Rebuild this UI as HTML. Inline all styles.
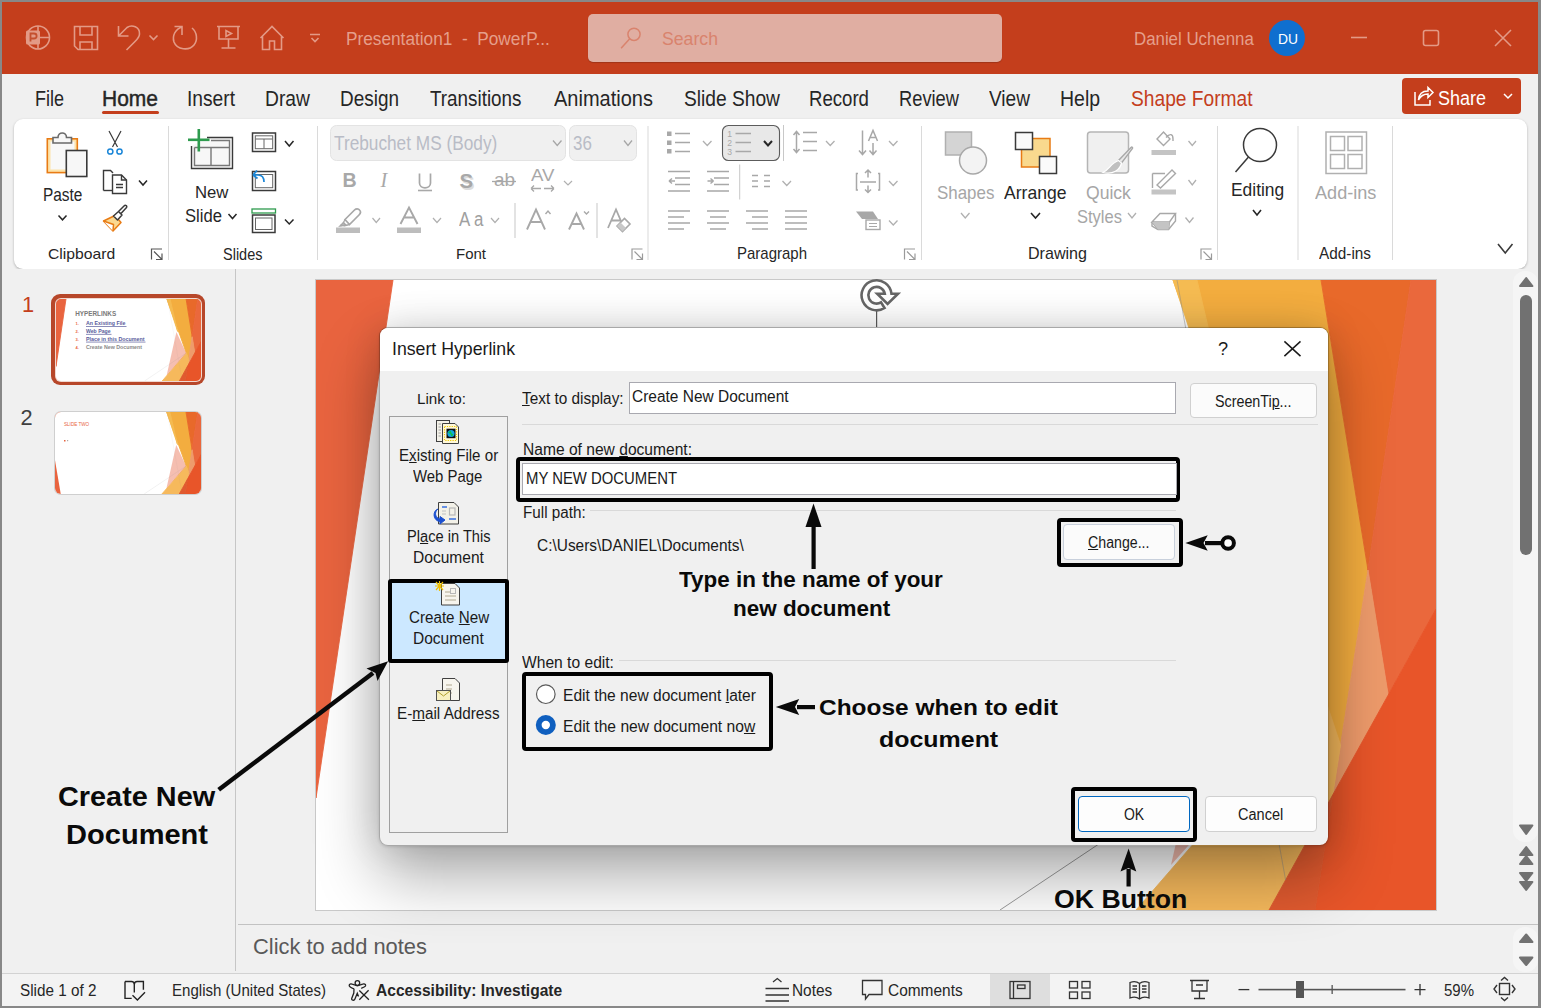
<!DOCTYPE html>
<html><head><meta charset="utf-8">
<style>
*{margin:0;padding:0;box-sizing:border-box}
html,body{width:1541px;height:1008px;overflow:hidden;background:#f0f0f0;font-family:"Liberation Sans",sans-serif;color:#262626}
.a{position:absolute;white-space:nowrap}
svg.a{overflow:visible}
</style></head><body>
<div class="a" style="left:0;top:0;width:1541px;height:74px;background:#c43e1c"></div>
<svg class="a" style="left:0;top:0" width="1541" height="74" viewBox="0 0 1541 74">
<g fill="none" stroke="#e39a86" stroke-width="1.6">
 <circle cx="38" cy="37.5" r="11.5"/>
 <path d="M38 26 V49 M38 37.5 H49.5"/>
 <rect x="26" y="30.5" width="14" height="14" rx="1.5" fill="#e39a86" stroke="none"/>
 <path d="M74.5 26.5 H97.5 V49.5 H78 L74.5 46 Z"/>
 <path d="M80 26.5 V35 H92 V26.5 M80 49.5 V42 H92 V49.5"/>
 <path d="M118.5 26 V36 H128.5 M118.5 36 L127 27.5 C132 24 140 27 139.5 34 C139.5 37 137.5 39 135 41.5 L126.5 50"/>
 <path d="M149.5 35.5 L153.5 39.5 L157.5 35.5"/>
 <path d="M174.5 26.5 H182 V35 M182.5 27 C175 29 172 36 174 42 C177 50 189 51 194 45 C198 40 197 32 192 28"/>
 <path d="M217 26.5 H240 M219 26.5 V39 H238 V26.5 M228.5 39 V48 M221.5 48 H235.5"/>
 <path d="M226 30.5 V36.5 L231.5 33.5 Z"/>
 <path d="M260.5 38 L272 26.5 L283.5 38 M262.5 36 V49.5 H269.5 V41 H274.5 V49.5 H281.5 V36"/>
 <path d="M310 34.5 H320 M311.5 38 L315 41.5 L318.5 38"/>
 <path d="M1351 37.5 H1367"/>
 <rect x="1423.5" y="30.5" width="15" height="15" rx="2"/>
 <path d="M1495 30 L1511 46 M1511 30 L1495 46"/>
</g>
<path d="M30.5 41.5 V33.5 H34 C37.5 33.5 37.5 38.5 34 38.5 H30.5" fill="none" stroke="#c4502f" stroke-width="1.8"/>
</svg>
<div class="a" style="left:346.00px;top:30.27px;font-size:18.46px;line-height:18.46px;color:#e59e8b;transform:scaleX(0.9350);transform-origin:0 0;white-space:pre;">Presentation1  -  PowerP...</div>
<div class="a" style="left:588px;top:14px;width:414px;height:48px;background:#e0aea2;border-radius:5px;box-shadow:0 1px 1px rgba(0,0,0,.18)"></div>
<svg class="a" style="left:600px;top:0" width="60" height="74"><g fill="none" stroke="#d9836d" stroke-width="1.6"><circle cx="34" cy="34.3" r="6.1" stroke-width="1.5"/><path d="M29.7 38.7 L21.1 48.2" stroke-width="1.5"/></g></svg>
<div class="a" style="left:662.00px;top:30.01px;font-size:18.90px;line-height:18.90px;color:#d9836d;transform:scaleX(0.9349);transform-origin:0 0;">Search</div>
<div class="a" style="left:1134.00px;top:30.37px;font-size:18.46px;line-height:18.46px;color:#e59e8b;transform:scaleX(0.9130);transform-origin:0 0;">Daniel Uchenna</div>
<div class="a" style="left:1269px;top:20px;width:36px;height:36px;border-radius:50%;background:#0f6fcf"></div>
<div class="a" style="left:1277.50px;top:30.56px;font-size:15.41px;line-height:15.41px;color:#ffffff;transform:scaleX(0.8983);transform-origin:0 0;">DU</div>
<div class="a" style="left:35.00px;top:88.44px;font-size:21.22px;line-height:21.22px;color:#262626;transform:scaleX(0.8488);transform-origin:0 0;">File</div>
<div class="a" style="left:102.00px;top:88.44px;font-size:21.22px;line-height:21.22px;color:#262626;transform:scaleX(0.9884);transform-origin:0 0;-webkit-text-stroke:0.45px #262626;">Home</div>
<div class="a" style="left:187.00px;top:88.44px;font-size:21.22px;line-height:21.22px;color:#262626;transform:scaleX(0.9048);transform-origin:0 0;">Insert</div>
<div class="a" style="left:265.00px;top:88.44px;font-size:21.22px;line-height:21.22px;color:#262626;transform:scaleX(0.9082);transform-origin:0 0;">Draw</div>
<div class="a" style="left:339.50px;top:88.44px;font-size:21.22px;line-height:21.22px;color:#262626;transform:scaleX(0.8925);transform-origin:0 0;">Design</div>
<div class="a" style="left:430.30px;top:88.44px;font-size:21.22px;line-height:21.22px;color:#262626;transform:scaleX(0.8881);transform-origin:0 0;">Transitions</div>
<div class="a" style="left:554.30px;top:88.44px;font-size:21.22px;line-height:21.22px;color:#262626;transform:scaleX(0.9425);transform-origin:0 0;">Animations</div>
<div class="a" style="left:684.00px;top:88.44px;font-size:21.22px;line-height:21.22px;color:#262626;transform:scaleX(0.9039);transform-origin:0 0;">Slide Show</div>
<div class="a" style="left:809.00px;top:88.44px;font-size:21.22px;line-height:21.22px;color:#262626;transform:scaleX(0.8767);transform-origin:0 0;">Record</div>
<div class="a" style="left:899.00px;top:88.44px;font-size:21.22px;line-height:21.22px;color:#262626;transform:scaleX(0.8620);transform-origin:0 0;">Review</div>
<div class="a" style="left:989.00px;top:88.44px;font-size:21.22px;line-height:21.22px;color:#262626;transform:scaleX(0.8986);transform-origin:0 0;">View</div>
<div class="a" style="left:1060.00px;top:88.44px;font-size:21.22px;line-height:21.22px;color:#262626;transform:scaleX(0.9172);transform-origin:0 0;">Help</div>
<div class="a" style="left:1131.00px;top:88.44px;font-size:21.22px;line-height:21.22px;color:#c43e1c;transform:scaleX(0.9045);transform-origin:0 0;">Shape Format</div>
<div class="a" style="left:102px;top:111px;width:57px;height:3px;border-radius:2px;background:#c43e1c"></div>
<div class="a" style="left:1402px;top:78px;width:119px;height:36px;border-radius:4px;background:#c43e1c"></div>
<svg class="a" style="left:1402px;top:78px" width="119" height="36"><g fill="none" stroke="#fff" stroke-width="1.5">
<path d="M13 14 V27 H28 V22"/><path d="M16.5 22 C17 15 21 13 26 13 V9.5 L31 14.5 L26 19.5 V16 C22 16 18.5 18 16.5 22 Z"/>
<path d="M102 16 L106 20 L110 16"/></g></svg>
<div class="a" style="left:1438.00px;top:87.77px;font-size:20.35px;line-height:20.35px;color:#ffffff;transform:scaleX(0.8835);transform-origin:0 0;">Share</div>
<div class="a" style="left:14px;top:119px;width:1513px;height:150px;background:#fff;border-radius:9px;box-shadow:0 1px 2.5px rgba(0,0,0,.28)"></div>
<svg class="a" style="left:0;top:0" width="1541" height="280" viewBox="0 0 1541 280"><rect x="168.0" y="126" width="1" height="134" fill="#dadada"/><rect x="317.0" y="126" width="1" height="134" fill="#dadada"/><rect x="647.5" y="126" width="1" height="134" fill="#dadada"/><rect x="921.0" y="126" width="1" height="134" fill="#dadada"/><rect x="1217.0" y="126" width="1" height="134" fill="#dadada"/><rect x="1297.5" y="126" width="1" height="134" fill="#dadada"/><rect x="1392.0" y="126" width="1" height="134" fill="#dadada"/><rect x="514.5" y="203" width="1" height="35" fill="#c8c8c8"/><rect x="596.5" y="203" width="1" height="35" fill="#c8c8c8"/><rect x="783.0" y="125" width="1" height="36" fill="#c8c8c8"/><rect x="739.2" y="164.5" width="1" height="35.0" fill="#c8c8c8"/>
<g stroke-width="1.6" fill="none">
<rect x="47.3" y="138.8" width="30" height="33.8" fill="#fde3a8" stroke="#e87b14"/>
<rect x="50.5" y="141.5" width="24" height="28" fill="#f8f8f8" stroke="none"/>
<path d="M53 143 V137.5 H58 C58 131.5 66.5 131.5 66.5 137.5 H71.5 V143 Z" fill="#f7f7f7" stroke="#6a6a6a"/>
<rect x="66.3" y="150.5" width="20.5" height="26" fill="#f7f7f7" stroke="#3a3a3a"/>
</g>
<g fill="none" stroke="#3a3a3a" stroke-width="1.2"><path d="M109 131 L117.5 147 M121 131 L112.5 147"/></g>
<g fill="none" stroke="#1a86d8" stroke-width="1.5"><circle cx="110.3" cy="151.5" r="2.6"/><circle cx="119.5" cy="151.5" r="2.6"/></g>
<g fill="none" stroke="#3a3a3a" stroke-width="1.4">
<path d="M103.5 190.5 V170.5 H110.5 L113 173"/><path d="M113 190.5 H103.5"/>
<path d="M112.5 175 H121.5 L126.5 180 V193.5 H112.5 Z" fill="#fff"/><path d="M121.5 175 V180 H126.5"/>
<path d="M116 184.5 H123 M116 187.5 H123"/>
</g>
<g fill="none" stroke-width="1.5" stroke-linejoin="round">
<path d="M103.5 221 L115 215.5 L121 222.5 L113 231 Z" fill="#fbd890" stroke="#e87b14"/>
<path d="M103.5 221 L113.5 224.5 L113 231" stroke="#e87b14" fill="#fff"/>
<path d="M113.5 216 L118.5 211.5 L122 215 L117.5 220 Z M118.5 211.5 L124 206 C125.5 204.5 127.5 206 126.5 207.5 L121 213.5" fill="#fff" stroke="#3a3a3a"/>
</g>
<path d="M58.5 215.5 L62.5 219.8 L66.5 215.5" stroke="#262626" stroke-width="1.5" fill="none"/><path d="M139 180.5 L143.0 185 L147 180.5" stroke="#262626" stroke-width="1.5" fill="none"/><g fill="none" stroke="#555" stroke-width="1.2"><path d="M151.5 259.5 V249.0 H162"/><path d="M154 251.5 L162 259.5 M162 253.5 V259.5 H156"/></g><g fill="none" stroke-width="1.4">
<path d="M207 137.5 H232.5 V168.5 H191.5 V146" stroke="#3a3a3a" fill="#f7f7f7"/>
<path d="M211 140.5 H229.5 V165.5 H194.5 V147.5" stroke="#777"/>
<path d="M194.5 147.5 H229 M211 147.5 V165.5" stroke="#777"/>
</g>
<rect x="188" y="138.5" width="21.5" height="2.6" fill="#2e9b4e"/><rect x="197.5" y="129" width="2.6" height="22.5" fill="#2e9b4e"/>
<g fill="none" stroke="#3a3a3a" stroke-width="1.5">
<rect x="252.5" y="133" width="23" height="18.5"/><rect x="255.3" y="135.8" width="17.4" height="12.9" stroke="#666" stroke-width="1"/><path d="M255.5 139 H272.5 M264 139 V148.5" stroke="#666" stroke-width="1"/>
<rect x="252.5" y="171.5" width="23" height="19" /><rect x="255.3" y="174.5" width="17.4" height="13.2" stroke="#666" stroke-width="1"/>
<rect x="252.5" y="215" width="22.5" height="17.5"/><rect x="255.5" y="218" width="16.5" height="11.5" stroke="#666" stroke-width="1"/>
</g>
<rect x="252" y="209" width="23.5" height="4" fill="#fff" stroke="#2e9b4e" stroke-width="1.3"/>
<g fill="none" stroke="#1a86d8" stroke-width="1.7"><path d="M253 175 L257 170.5 M253 175 L257.5 178.5 M253.5 175 H258 C262 175 264 178 264 182"/></g>
<path d="M228.5 214 L232.5 218.5 L236.5 214" stroke="#262626" stroke-width="1.5" fill="none"/><path d="M285 141 L289.25 146 L293.5 141" stroke="#262626" stroke-width="1.5" fill="none"/><path d="M285 219.5 L289.25 224 L293.5 219.5" stroke="#262626" stroke-width="1.5" fill="none"/><rect x="330.5" y="125.5" width="235" height="35" rx="6" fill="#f0f0f0" stroke="#e3e3e3"/><rect x="569.5" y="125.5" width="67" height="35" rx="6" fill="#f0f0f0" stroke="#e3e3e3"/><path d="M553 140.5 L557.25 145.5 L561.5 140.5" stroke="#a6a6a6" stroke-width="1.3" fill="none"/><path d="M624 140.5 L628.0 145.5 L632 140.5" stroke="#a6a6a6" stroke-width="1.3" fill="none"/><path d="M564 181 L568.0 185 L572 181" stroke="#b0b0b0" stroke-width="1.2" fill="none"/><path d="M372.5 218 L376.25 222.5 L380 218" stroke="#b0b0b0" stroke-width="1.2" fill="none"/><path d="M433 218 L437.0 222.5 L441 218" stroke="#b0b0b0" stroke-width="1.2" fill="none"/><path d="M491 218 L495.0 222.5 L499 218" stroke="#b0b0b0" stroke-width="1.2" fill="none"/><g fill="none" stroke="#a8a8a8" stroke-width="1.3">
<path d="M419.5 173.5 V183 C419.5 189.5 430.5 189.5 430.5 183 V173.5" stroke-width="1.7"/><path d="M418 190.5 H432" stroke-width="1.6"/>
<path d="M492 181.5 H516" />
<path d="M532 188 L543 188 M533.5 188.5 L530.5 185.5 L533.5 182.5 M541.5 182.5 L544.5 185.5 L541.5 188.5" stroke-width="0"/>
</g>
<g fill="none" stroke="#a8a8a8" stroke-width="1.3">
<path d="M531 188.5 H541 M531 188.5 L534 185.5 M531 188.5 L534 191.5 M544 188.5 H554 M554 188.5 L551 185.5 M554 188.5 L551 191.5"/>

</g>
<rect x="336" y="227.5" width="24" height="5.5" fill="#bdbdbd"/>
<rect x="397" y="227.5" width="24" height="5.5" fill="#bdbdbd"/>
<g fill="none" stroke="#a8a8a8" stroke-width="1.3">
<path d="M345 219.5 L354.5 210 C356 208.5 358.5 208.5 359.5 210 C361 211.5 360.5 213.5 359 215 L349.5 224.5 Z" fill="#fff" stroke-width="1.7"/><path d="M345 219.5 L342 225.5 L340 225.5 M349.5 224.5 L343.5 226" /><path d="M340 226 L343.5 222.5 L346 225 Z" fill="#bbb"/>
<path d="M400.5 224 L409 207.5 L417.5 224 M403.6 217.5 H414.4" stroke-width="1.9"/>
<path d="M527 229.5 L536 209.5 L545 229.5 M530 222 H542" stroke-width="1.9"/><path d="M545.5 214 L548 211 L550.5 214" stroke-width="1.4"/>
<path d="M569 229.5 L576.5 213.5 L584 229.5 M571.5 224 H581.5" stroke-width="1.9"/><path d="M584 211.5 L586.5 214 L589 211.5" stroke-width="1.4"/>
<path d="M608 228 L616 209.5 L624 228 M611 220.5 H620" stroke-width="1.8"/>
<path d="M617 226 L624.5 218.5 L630 224 L622.5 231.5 Z" fill="#fff" stroke-width="1.6"/><path d="M617 226 L620.5 222.5 L626 228 L622.5 231.5 Z" fill="#c8c8c8" stroke="none"/>
</g>
<g fill="none" stroke="#9a9a9a" stroke-width="1.2"><path d="M632.0 259.5 V249.0 H642.5"/><path d="M634.5 251.5 L642.5 259.5 M642.5 253.5 V259.5 H636.5"/></g><rect x="722.5" y="125.5" width="57" height="35" rx="6" fill="#e8e8e8" stroke="#5c5c5c" stroke-width="1.1"/><g fill="#a8a8a8">
<rect x="667" y="131.5" width="4.5" height="4.5"/><rect x="667" y="140.5" width="4.5" height="4.5"/><rect x="667" y="149" width="4.5" height="4.5"/>
</g>
<g fill="none" stroke="#a8a8a8" stroke-width="1.5">
<path d="M675 133.5 H690 M675 142.5 H690 M675 151.5 H690"/>
<path d="M735.5 133.5 H751 M735.5 142.5 H751 M735.5 151.5 H751"/>
<path d="M803 132.5 H817 M803 141.5 H817 M803 150.5 H817 M796.5 131.5 V152.5 M793.5 135 L796.5 131.5 L799.5 135 M793.5 149 L796.5 152.5 L799.5 149"/>
<path d="M862.5 130.5 V154.5 M859 150.5 L862.5 154.5 L866 150.5 M873 143 V154.5 M869.5 150.5 L873 154.5 L876.5 150.5 M868.5 141 L873 130.5 L877.5 141 M870 137.5 H876"/>
<path d="M668 171.5 H690 M675 178 H690 M675 184.5 H690 M668 191 H690 M669 181 H675 M669 181 L672 178.5 M669 181 L672 183.5"/>
<path d="M707 171.5 H729 M714 178 H729 M714 184.5 H729 M707 191 H729 M707.5 181 H713.5 M713.5 181 L710.5 178.5 M713.5 181 L710.5 183.5"/>
<path d="M752 175.5 H758 M752 181 H758 M752 186.5 H758 M764 175.5 H770 M764 181 H770 M764 186.5 H770" stroke-width="1.3"/>
<path d="M858 173.5 H856.5 V190 H858 M878 173.5 H879.5 V190 H878 M860 182 H876 M868 170 V177.5 M868 185.5 V192.5 M865 173 L868 170 L871 173 M865 189.5 L868 192.5 L871 189.5"/>
<path d="M668 211 H690 M668 217 H684 M668 223 H690 M668 229 H684"/>
<path d="M707 211 H729 M710 217 H726 M707 223 H729 M710 229 H726"/>
<path d="M746 211 H768 M752 217 H768 M746 223 H768 M752 229 H768"/>
<path d="M785 211 H807 M785 217 H807 M785 223 H807 M785 229 H807"/>
</g>
<g fill="#a8a8a8"><path d="M856 211.5 H873 L878 219 H862 Z"/></g>
<g fill="#fff" stroke="#a8a8a8" stroke-width="1.4"><rect x="866" y="220" width="14" height="9.5"/><path d="M869 223.5 H877 M869 226.5 H877" stroke-width="1"/></g>
<g fill="none" stroke="#262626" stroke-width="2"><path d="M764 141 L768 145.5 L772 141"/></g>
<text x="727.3" y="137.3" font-family="Liberation Sans" font-size="8.6" fill="#a8a8a8">1</text><text x="727.3" y="146" font-family="Liberation Sans" font-size="8.6" fill="#a8a8a8">2</text><text x="727.3" y="155.2" font-family="Liberation Sans" font-size="8.6" fill="#a8a8a8">3</text><path d="M703 141 L707.25 145.5 L711.5 141" stroke="#b0b0b0" stroke-width="1.3" fill="none"/><path d="M826 141 L830.25 145.5 L834.5 141" stroke="#b0b0b0" stroke-width="1.3" fill="none"/><path d="M889 141 L893.25 145.5 L897.5 141" stroke="#b0b0b0" stroke-width="1.3" fill="none"/><path d="M782.5 181 L786.75 185.5 L791.0 181" stroke="#b0b0b0" stroke-width="1.3" fill="none"/><path d="M889 181 L893.25 185.5 L897.5 181" stroke="#b0b0b0" stroke-width="1.3" fill="none"/><path d="M889 220.5 L893.25 225.0 L897.5 220.5" stroke="#b0b0b0" stroke-width="1.3" fill="none"/><g fill="none" stroke="#9a9a9a" stroke-width="1.2"><path d="M904.5 259.5 V249.0 H915"/><path d="M907 251.5 L915 259.5 M915 253.5 V259.5 H909"/></g><g stroke-width="1.5">
<rect x="945.5" y="132" width="26" height="23" fill="#d4d4d4" stroke="#b0b0b0"/>
<circle cx="973" cy="160.5" r="13.5" fill="#f3f3f3" stroke="#a8a8a8"/>
<rect x="1021.5" y="138.5" width="28.5" height="28.5" fill="#f9d98e" stroke="#e87b14"/>
<rect x="1015.5" y="132.5" width="17" height="17" fill="#fafafa" stroke="#3a3a3a"/>
<rect x="1039.5" y="156.5" width="17" height="17" fill="#fafafa" stroke="#3a3a3a"/>
<rect x="1087.5" y="132" width="41" height="41" rx="3" fill="#f0f0f0" stroke="#b5b5b5"/>
</g>
<g fill="none" stroke="#a8a8a8" stroke-width="1.4">
<path d="M1131 147.5 C1132 146.5 1133 147.5 1132.5 148.5 L1121.5 163 L1118.5 160.5 Z" fill="#e8e8e8" stroke-width="1.4"/><path d="M1118.5 160.5 L1121.5 163 C1120 170 1113 175 1103 172.5 C1109 170 1111 163 1118.5 160.5 Z" fill="#c0c0c0" stroke="#fff" stroke-width="1.2"/>
<path d="M1157 139 L1163.5 132 L1170 139 L1163.5 145.5 Z M1166 137.5 C1170 133 1173 134 1173 139 V141"/>
<path d="M1152.5 173.5 V188 M1152.5 173.5 H1165 M1157 185 L1172 170 L1175.5 173.5 L1160.5 188 Z"/>
<path d="M1152 222 L1160 213.5 H1175.5 L1169.5 222 Z" fill="#fff"/><path d="M1152 222 V226 L1158 229.5 H1168.5 L1175.5 221 V213.5" /><path d="M1152 222 L1158 229.5 M1169.5 222 L1168.5 229.5"/>
</g>
<rect x="1151.5" y="150" width="24.5" height="5" fill="#c4c4c4"/>
<rect x="1151.5" y="189.5" width="24.5" height="5" fill="#c4c4c4"/>
<g fill="#c4c4c4"><path d="M1152 222 L1158 229.5 H1168.5 L1169.5 222 Z"/></g>
<g fill="none" stroke="#3a3a3a" stroke-width="1.5">
<circle cx="1260" cy="145" r="16.5"/><path d="M1248.5 157 L1235.5 172"/>
</g>
<g fill="none" stroke="#b0b0b0" stroke-width="1.5">
<rect x="1326" y="132" width="40.5" height="41.5"/><rect x="1330.5" y="136.5" width="14" height="14"/><rect x="1348" y="136.5" width="14" height="14"/><rect x="1330.5" y="154.5" width="14" height="14"/><rect x="1348" y="154.5" width="14" height="14"/>
</g>
<path d="M961 213 L965.25 218 L969.5 213" stroke="#b0b0b0" stroke-width="1.3" fill="none"/><path d="M1031 213 L1035.5 218 L1040 213" stroke="#262626" stroke-width="1.6" fill="none"/><path d="M1128 213 L1132.0 218 L1136 213" stroke="#b0b0b0" stroke-width="1.3" fill="none"/><path d="M1188.5 141 L1192.25 145.5 L1196 141" stroke="#b0b0b0" stroke-width="1.3" fill="none"/><path d="M1188.5 180 L1192.25 185 L1196 180" stroke="#b0b0b0" stroke-width="1.3" fill="none"/><path d="M1185.5 217.5 L1189.5 222.5 L1193.5 217.5" stroke="#b0b0b0" stroke-width="1.3" fill="none"/><path d="M1253 210 L1257.0 215 L1261 210" stroke="#262626" stroke-width="1.6" fill="none"/><g fill="none" stroke="#9a9a9a" stroke-width="1.2"><path d="M1201.0 259.5 V249.0 H1211.5"/><path d="M1203.5 251.5 L1211.5 259.5 M1211.5 253.5 V259.5 H1205.5"/></g><path d="M1498 244 L1505.25 253 L1512.5 244" stroke="#3a3a3a" stroke-width="1.6" fill="none"/></svg>
<div class="a" style="left:43.30px;top:186.14px;font-size:18.02px;line-height:18.02px;color:#262626;transform:scaleX(0.8556);transform-origin:0 0;">Paste</div>
<div class="a" style="left:48.40px;top:245.56px;font-size:15.41px;line-height:15.41px;color:#262626;transform:scaleX(1.0191);transform-origin:0 0;">Clipboard</div>
<div class="a" style="left:195.00px;top:183.98px;font-size:17.15px;line-height:17.15px;color:#262626;transform:scaleX(0.9742);transform-origin:0 0;">New</div>
<div class="a" style="left:184.80px;top:207.54px;font-size:17.44px;line-height:17.44px;color:#262626;transform:scaleX(0.9534);transform-origin:0 0;">Slide</div>
<div class="a" style="left:222.50px;top:246.51px;font-size:15.70px;line-height:15.70px;color:#262626;transform:scaleX(0.9234);transform-origin:0 0;">Slides</div>
<div class="a" style="left:334.00px;top:133.71px;font-size:19.48px;line-height:19.48px;color:#b9bcc6;transform:scaleX(0.8858);transform-origin:0 0;">Trebuchet MS (Body)</div>
<div class="a" style="left:572.70px;top:133.71px;font-size:19.48px;line-height:19.48px;color:#b9bcc6;transform:scaleX(0.8696);transform-origin:0 0;">36</div>
<div class="a" style="left:342.50px;top:170.89px;font-size:19.62px;line-height:19.62px;color:#a8a8a8;font-weight:bold;">B</div>
<div class="a" style="left:380.5px;top:170px;font-family:'Liberation Serif',serif;font-style:italic;font-size:20px;line-height:20px;color:#a8a8a8">I</div>
<div class="a" style="left:459.50px;top:170.77px;font-size:20.35px;line-height:20.35px;color:#a8a8a8;font-weight:bold;text-shadow:1.5px 1.5px 0 #dcdcdc;">S</div>
<div class="a" style="left:493.50px;top:172.24px;font-size:17.44px;line-height:17.44px;color:#a8a8a8;transform:scaleX(1.0847);transform-origin:0 0;">ab</div>
<div class="a" style="left:531.00px;top:167.85px;font-size:16.72px;line-height:16.72px;color:#a8a8a8;transform:scaleX(1.1158);transform-origin:0 0;">AV</div>
<div class="a" style="left:459.00px;top:209.27px;font-size:20.35px;line-height:20.35px;color:#a0a0a0;transform:scaleX(0.8303);transform-origin:0 0;white-space:pre;">A a</div>
<div class="a" style="left:456.00px;top:246.20px;font-size:15.12px;line-height:15.12px;color:#262626;transform:scaleX(0.9923);transform-origin:0 0;">Font</div>
<div class="a" style="left:737.30px;top:246.27px;font-size:15.99px;line-height:15.99px;color:#262626;transform:scaleX(0.9375);transform-origin:0 0;">Paragraph</div>
<div class="a" style="left:936.60px;top:183.92px;font-size:18.17px;line-height:18.17px;color:#a6a6a6;transform:scaleX(0.9319);transform-origin:0 0;">Shapes</div>
<div class="a" style="left:1004.20px;top:183.92px;font-size:18.17px;line-height:18.17px;color:#262626;transform:scaleX(0.9678);transform-origin:0 0;">Arrange</div>
<div class="a" style="left:1086.00px;top:183.92px;font-size:18.17px;line-height:18.17px;color:#a6a6a6;transform:scaleX(0.9675);transform-origin:0 0;">Quick</div>
<div class="a" style="left:1077.00px;top:208.12px;font-size:18.17px;line-height:18.17px;color:#a6a6a6;transform:scaleX(0.9089);transform-origin:0 0;">Styles</div>
<div class="a" style="left:1028.00px;top:245.67px;font-size:15.99px;line-height:15.99px;color:#262626;transform:scaleX(1.0055);transform-origin:0 0;">Drawing</div>
<div class="a" style="left:1230.60px;top:181.02px;font-size:18.17px;line-height:18.17px;color:#262626;transform:scaleX(0.9587);transform-origin:0 0;">Editing</div>
<div class="a" style="left:1314.60px;top:183.92px;font-size:18.17px;line-height:18.17px;color:#a6a6a6;transform:scaleX(0.9969);transform-origin:0 0;">Add-ins</div>
<div class="a" style="left:1318.70px;top:246.47px;font-size:15.99px;line-height:15.99px;color:#262626;transform:scaleX(0.9594);transform-origin:0 0;">Add-ins</div>
<div class="a" style="left:0;top:269px;width:235px;height:704px;background:#f0f0f0"></div>
<div class="a" style="left:235px;top:269px;width:1px;height:702px;background:#c6c6c6"></div>
<div class="a" style="left:236px;top:269px;width:1305px;height:655px;background:#f0f0f0"></div>
<div class="a" style="left:236px;top:924px;width:1305px;height:49px;background:#f0f0f0"></div>
<div class="a" style="left:238px;top:923.5px;width:1303px;height:1px;background:#c2c2c2"></div>
<div class="a" style="left:253.00px;top:935.88px;font-size:22.24px;line-height:22.24px;color:#595959;transform:scaleX(0.9842);transform-origin:0 0;">Click to add notes</div>
<svg class="a" style="left:0;top:0;width:0;height:0"><defs>
<symbol id="facet" viewBox="0 0 1120 630">
<rect x="0" y="0" width="1120" height="630" fill="#ffffff"/>
<polygon class="ls" points="0,0 77,0 0,518" fill="#e9643f" stroke="#e9643f" stroke-width="0.9" vector-effect="non-scaling-stroke"/>
<polygon points="857,0 1005,0 1052,290 1024.5,465" fill="#f3ad3f" stroke="#f3ad3f" stroke-width="0.9" vector-effect="non-scaling-stroke"/>
<polygon points="857,0 881,0 940,250" fill="#f5bb52" stroke="#f5bb52" stroke-width="0.9" vector-effect="non-scaling-stroke"/>
<polygon points="1005,0 1095,0 1052,290" fill="#e8692a" stroke="#e8692a" stroke-width="0.9" vector-effect="non-scaling-stroke"/>
<polygon points="1095,0 1120,0 1120,329 1072.2,415 1052,290" fill="#ea683c" stroke="#ea683c" stroke-width="0.9" vector-effect="non-scaling-stroke"/>
<polygon points="1052,290 1072.2,415 1016.7,515" fill="#ee9b6b" stroke="#ee9b6b" stroke-width="0.9" vector-effect="non-scaling-stroke"/>

<polygon points="820,630 1007.5,414 1024.5,465 1016.7,515 953,630" fill="#f6b95c" stroke="#f6b95c" stroke-width="0.9" vector-effect="non-scaling-stroke"/>
<polygon points="930,254 1006,416 855,585" fill="#ec7d62" fill-opacity="0.5"/>
<polygon points="1016.7,515 1120,329 1120,630 999,630" fill="#e85529" stroke="#e85529" stroke-width="0.9" vector-effect="non-scaling-stroke"/>
<polygon points="1016.7,515 999,630 953,630" fill="#e05a2f" stroke="#e05a2f" stroke-width="0.9" vector-effect="non-scaling-stroke"/>
<line x1="861" y1="0" x2="969.6" y2="600" stroke="#8a8a8a" stroke-width="0.8" stroke-opacity="0.6"/>
<line x1="684" y1="630" x2="1000" y2="419" stroke="#9a9a9a" stroke-width="1"/>
</symbol>
</defs></svg>
<div class="a" style="left:51px;top:294px;width:154px;height:91px;border-radius:9px;background:#b7472a"></div>
<div class="a" style="left:54.5px;top:297.5px;width:147px;height:84px;border-radius:6px;background:#f0d8d0"></div>
<div class="a" style="left:55.5px;top:298.5px;width:145px;height:82px;border-radius:5px;overflow:hidden"><svg width="145" height="82" viewBox="0 0 1120 630" preserveAspectRatio="none"><use href="#facet"/></svg></div>
<svg class="a" style="left:55.5px;top:298.5px" width="145" height="82"><text x="19.2" y="16.5" font-family="Liberation Sans" font-weight="bold" font-size="6.4" fill="#7a7a7a" textLength="41" lengthAdjust="spacingAndGlyphs">HYPERLINKS</text><text x="19.5" y="26" font-family="Liberation Sans" font-weight="bold" font-size="4" fill="#e8643f">1.</text><text x="30" y="26" font-family="Liberation Sans" font-size="5" font-weight="bold" fill="#5a5c9c" textLength="39.5" lengthAdjust="spacingAndGlyphs">An Existing File</text><rect x="30" y="27" width="40.5" height="0.7" fill="#5a5c9c"/><text x="19.5" y="33.9" font-family="Liberation Sans" font-weight="bold" font-size="4" fill="#e8643f">2.</text><text x="30" y="33.9" font-family="Liberation Sans" font-size="5" font-weight="bold" fill="#5a5c9c" textLength="24.5" lengthAdjust="spacingAndGlyphs">Web Page</text><rect x="30" y="34.9" width="25.5" height="0.7" fill="#5a5c9c"/><text x="19.5" y="41.7" font-family="Liberation Sans" font-weight="bold" font-size="4" fill="#e8643f">3.</text><text x="30" y="41.7" font-family="Liberation Sans" font-size="5" font-weight="bold" fill="#5a5c9c" textLength="58.5" lengthAdjust="spacingAndGlyphs">Place in this Document</text><rect x="30" y="42.7" width="59.5" height="0.7" fill="#5a5c9c"/><text x="19.5" y="49.5" font-family="Liberation Sans" font-weight="bold" font-size="4" fill="#e8643f">4.</text><text x="30" y="49.5" font-family="Liberation Sans" font-size="5" font-weight="bold" fill="#8a8a8a" textLength="56" lengthAdjust="spacingAndGlyphs">Create New Document</text></svg>
<div class="a" style="left:55px;top:412px;width:146px;height:82px;border-radius:6px;overflow:hidden;box-shadow:0 0 0 1px #cfcfcf"><svg width="146" height="82" viewBox="0 0 1120 630" preserveAspectRatio="none"><use href="#facet"/><rect x="0" y="0" width="90" height="530" fill="#fff"/><polygon points="0,370 44,630 0,630" fill="#e9643f"/></svg></div>
<svg class="a" style="left:55px;top:412px" width="146" height="82"><text x="9" y="14" font-family="Liberation Sans" font-size="4.6" fill="#e8643f">SLIDE TWO</text><rect x="9" y="28" width="1.5" height="1.5" fill="#e8643f"/><rect x="12" y="28" width="1.2" height="1.2" fill="#aaa"/></svg>
<div class="a" style="left:22.00px;top:293.54px;font-size:21.80px;line-height:21.80px;color:#c43e1c;">1</div>
<div class="a" style="left:20.50px;top:407.04px;font-size:21.80px;line-height:21.80px;color:#404040;">2</div>
<div class="a" style="left:315px;top:279px;width:1122px;height:632px;background:#c9c9c9"></div>
<svg class="a" style="left:316px;top:280px" width="1120" height="630" viewBox="0 0 1120 630"><use href="#facet"/></svg>
<svg class="a" style="left:850px;top:275px" width="60" height="60" viewBox="850 275 60 60">
<line x1="876.6" y1="310" x2="876.6" y2="327" stroke="#5a5a5a" stroke-width="1.2"/>
<path d="M884.55 308 A15 15 0 1 1 891.5 293.8 L898 293.8 L887.6 304 L877.2 293.8 L884.8 293.8 A8.3 8.3 0 1 0 881 302.3 Z" fill="#fff" stroke="#666" stroke-width="2.6" stroke-linejoin="miter"/>
</svg>
<div class="a" style="left:1513px;top:271px;width:25px;height:571px;border-radius:12px;background:#f5f5f5"></div>
<div class="a" style="left:1513px;top:927px;width:25px;height:45px;border-radius:12px;background:#f5f5f5"></div>
<svg class="a" style="left:1500px;top:260px" width="41" height="720" viewBox="1500 260 41 720">
<g fill="#717171" stroke="#717171" stroke-width="2" stroke-linejoin="round">
<path d="M1520 286 L1526.2 278 L1532.4 286 Z"/>
<path d="M1520 825.5 L1532.4 825.5 L1526.2 834 Z"/>
<path d="M1520 855 L1526.2 847 L1532.4 855 Z"/><path d="M1520 864 L1526.2 856 L1532.4 864 Z"/>
<path d="M1520 873 L1532.4 873 L1526.2 881 Z"/><path d="M1520 882 L1532.4 882 L1526.2 890 Z"/>
<path d="M1520 942 L1526.2 934.5 L1532.4 942 Z"/>
<path d="M1520 957.5 L1532.4 957.5 L1526.2 965 Z"/>
</g>
<rect x="1520" y="295" width="12" height="260" rx="6" fill="#717171"/>
</svg>
<div class="a" style="left:379px;top:326.5px;width:949.5px;height:519px;border-radius:9px;box-shadow:0 30px 64px rgba(0,0,0,.33),0 0 36px rgba(0,0,0,.13),0 1px 3px rgba(0,0,0,.12)"></div>
<div class="a" style="left:379px;top:326.5px;width:949.5px;height:519px;border-radius:9px;background:#f0f0f0;background-clip:padding-box;border:1.5px solid rgba(0,0,0,.34);overflow:hidden"><div style="position:absolute;left:0;top:0;width:949px;height:43.5px;background:#ffffff"></div></div>
<div class="a" style="left:391.80px;top:340.87px;font-size:17.88px;line-height:17.88px;color:#1a1a1a;transform:scaleX(0.9915);transform-origin:0 0;">Insert Hyperlink</div>
<svg class="a" style="left:1270px;top:330px" width="50" height="40"><path d="M14.4 11.4 L30.5 26.1 M30.5 11.4 L14.4 26.1" stroke="#1a1a1a" stroke-width="1.5" fill="none"/></svg>
<div class="a" style="left:1218.00px;top:339.62px;font-size:18.17px;line-height:18.17px;color:#1a1a1a;">?</div>
<div class="a" style="left:417.10px;top:391.13px;font-size:15.55px;line-height:15.55px;color:#1a1a1a;transform:scaleX(0.9769);transform-origin:0 0;">Link to:</div>
<div class="a" style="left:389px;top:416px;width:119px;height:417px;border:1px solid #a0a0a0;background:#f0f0f0"></div>
<div class="a" style="left:388px;top:578.5px;width:120.5px;height:84px;border:4px solid #000;border-radius:3px;background:#cce8ff"></div>
<svg class="a" style="left:425px;top:415px" width="45" height="300" viewBox="425 415 45 300">
<g stroke="#404040" stroke-width="1">
<rect x="436.5" y="420.5" width="13" height="21" fill="#f3f1e8"/>
<path d="M438.5 424 H441 M438.5 427 H441 M438.5 430 H441 M438.5 433 H441 M438.5 436 H441" stroke="#a0a0a0"/>
<path d="M442.5 423.5 H455 L458.5 427 V443.5 H442.5 Z" fill="#fff8d8"/>
<rect x="444.5" y="426.5" width="12" height="14" fill="none" stroke="#f0c800" stroke-width="1.1" stroke-dasharray="1.2 1.2"/><rect x="446.5" y="428.7" width="9" height="9.5" fill="#111" stroke="none"/>
<circle cx="451" cy="433.5" r="3.6" fill="#10a8e0" stroke="none"/><path d="M448.5 432 L453 435 M450 431 L452 436" stroke="#10c050" stroke-width="1.4"/>

<path d="M438.5 502.5 H454 L458.5 507 V524 H438.5 Z" fill="#f3f1e8"/><path d="M442 507 H447 M449 519 H456" stroke="#3a70e0" stroke-width="1.3" fill="none"/><rect x="449.5" y="508" width="5.5" height="7" fill="none" stroke="#b8b8b8" stroke-width="1.2"/><path d="M442 511 H446 M442 514 H446" stroke="#c0c0c0" fill="none"/>
<path d="M438 509 C434 512 435 518 440 519 L440 516.5 L445 520 L440 524 L440 521.5 C433 521 432 511 438 509 Z" fill="#1a4fd0" stroke="#1a4fd0"/>
<path d="M441.5 583.5 H455 L459.5 588 V605 H441.5 Z" fill="#f7f5ee"/>
<path d="M445 592 H450 M445 596 H456 M445 600 H456" stroke="#b0a890" fill="none"/><rect x="450.5" y="588.5" width="5" height="5" stroke="#b8b8b8" fill="none"/>
<path d="M436 582 L443 590 M443 582 L436 590 M439.5 581 V591 M435 586 H444" stroke="#f0c000" stroke-width="1.2"/>
<path d="M442.5 678.5 H455 L459.5 683 V700.5 H442.5 Z" fill="#f7f5ee"/>
<path d="M446 685 H452 M446 689 H452 M446 693 H452" stroke="#b0a890" fill="none"/>
<rect x="436.5" y="690.5" width="14" height="10" fill="#f8f0c0" stroke="#505050"/>
<path d="M437 691 L443.5 696 L450 691" stroke="#b0a030" fill="none"/>
</g>
</svg>
<div class="a" style="left:398.60px;top:447.79px;font-size:15.84px;line-height:15.84px;color:#1a1a1a;transform:scaleX(0.9554);transform-origin:0 0;">E<u>x</u>isting File or</div>
<div class="a" style="left:413.20px;top:468.99px;font-size:15.84px;line-height:15.84px;color:#1a1a1a;transform:scaleX(0.9420);transform-origin:0 0;">Web Page</div>
<div class="a" style="left:406.60px;top:528.99px;font-size:15.84px;line-height:15.84px;color:#1a1a1a;transform:scaleX(0.9249);transform-origin:0 0;">Pl<u>a</u>ce in This</div>
<div class="a" style="left:412.70px;top:549.79px;font-size:15.84px;line-height:15.84px;color:#1a1a1a;transform:scaleX(0.9828);transform-origin:0 0;">Document</div>
<div class="a" style="left:408.60px;top:609.69px;font-size:15.84px;line-height:15.84px;color:#1a1a1a;transform:scaleX(0.9590);transform-origin:0 0;">Create <u>N</u>ew</div>
<div class="a" style="left:412.80px;top:630.79px;font-size:15.84px;line-height:15.84px;color:#1a1a1a;transform:scaleX(0.9800);transform-origin:0 0;">Document</div>
<div class="a" style="left:396.70px;top:705.79px;font-size:15.84px;line-height:15.84px;color:#1a1a1a;transform:scaleX(0.9639);transform-origin:0 0;">E-<u>m</u>ail Address</div>
<div class="a" style="left:522.30px;top:391.39px;font-size:15.84px;line-height:15.84px;color:#1a1a1a;transform:scaleX(0.9704);transform-origin:0 0;"><u>T</u>ext to display:</div>
<div class="a" style="left:629px;top:382px;width:547px;height:32px;border:1px solid #a9a9b0;background:#fff"></div>
<div class="a" style="left:632.10px;top:389.49px;font-size:15.84px;line-height:15.84px;color:#1a1a1a;transform:scaleX(0.9778);transform-origin:0 0;">Create New Document</div>
<div class="a" style="left:1190px;top:382.5px;width:127px;height:35px;border:1px solid #d0d0d0;border-radius:4px;background:#fbfbfb"></div>
<div class="a" style="left:1215.40px;top:393.99px;font-size:15.84px;line-height:15.84px;color:#1a1a1a;transform:scaleX(0.9029);transform-origin:0 0;">ScreenTi<u>p</u>...</div>
<div class="a" style="left:522px;top:424px;width:796px;height:1px;background:#d9d9d9"></div>
<div class="a" style="left:522.50px;top:442.29px;font-size:15.84px;line-height:15.84px;color:#1a1a1a;transform:scaleX(0.9852);transform-origin:0 0;">Name of new <u>d</u>ocument:</div>
<div class="a" style="left:516px;top:457px;width:664px;height:45px;border:4px solid #000;border-radius:4px"></div>
<div class="a" style="left:521.5px;top:463px;width:655px;height:32px;border:1px solid #a9a9b0;background:#fff"></div>
<div class="a" style="left:525.80px;top:470.69px;font-size:15.84px;line-height:15.84px;color:#1a1a1a;transform:scaleX(0.9403);transform-origin:0 0;">MY NEW DOCUMENT</div>
<div class="a" style="left:522.50px;top:504.89px;font-size:15.84px;line-height:15.84px;color:#1a1a1a;transform:scaleX(0.9617);transform-origin:0 0;">Full path:</div>
<div class="a" style="left:590px;top:510px;width:586px;height:1px;background:#d9d9d9"></div>
<div class="a" style="left:536.70px;top:537.69px;font-size:15.84px;line-height:15.84px;color:#1a1a1a;transform:scaleX(0.9754);transform-origin:0 0;">C:\Users\DANIEL\Documents\</div>
<div class="a" style="left:1056.5px;top:518px;width:126px;height:49px;border:4px solid #000;border-radius:4px"></div>
<div class="a" style="left:1063px;top:524px;width:112px;height:36px;border:1px solid #c8d0dc;border-radius:4px;background:#fbfbfb"></div>
<div class="a" style="left:1088.30px;top:535.19px;font-size:15.84px;line-height:15.84px;color:#1a1a1a;transform:scaleX(0.8955);transform-origin:0 0;"><u>C</u>hange...</div>
<div class="a" style="left:522.20px;top:654.59px;font-size:15.84px;line-height:15.84px;color:#1a1a1a;transform:scaleX(0.9859);transform-origin:0 0;">When to edit:</div>
<div class="a" style="left:619px;top:660px;width:557px;height:1px;background:#d9d9d9"></div>
<div class="a" style="left:522px;top:672px;width:250.5px;height:79px;border:4px solid #000;border-radius:4px"></div>
<svg class="a" style="left:530px;top:680px" width="40" height="60" viewBox="530 680 40 60">
<circle cx="545.8" cy="694.2" r="9.3" fill="#fff" stroke="#5a5a5a" stroke-width="1.2"/>
<circle cx="545.8" cy="725" r="10" fill="#0f5fbf"/>
<circle cx="545.8" cy="725" r="4.2" fill="#fff"/>
</svg>
<div class="a" style="left:562.50px;top:687.89px;font-size:15.84px;line-height:15.84px;color:#1a1a1a;transform:scaleX(0.9833);transform-origin:0 0;">Edit the new document <u>l</u>ater</div>
<div class="a" style="left:562.50px;top:719.09px;font-size:15.84px;line-height:15.84px;color:#1a1a1a;transform:scaleX(0.9886);transform-origin:0 0;">Edit the new document no<u>w</u></div>
<div class="a" style="left:1071px;top:787px;width:126px;height:55px;border:4px solid #000;border-radius:4px"></div>
<div class="a" style="left:1078px;top:796px;width:112px;height:36px;border:1.5px solid #0067c0;border-radius:4px;background:#fdfdfd"></div>
<div class="a" style="left:1123.50px;top:807.39px;font-size:15.84px;line-height:15.84px;color:#1a1a1a;transform:scaleX(0.8824);transform-origin:0 0;">OK</div>
<div class="a" style="left:1205px;top:796px;width:111.5px;height:36px;border:1px solid #d0d0d0;border-radius:4px;background:#fdfdfd"></div>
<div class="a" style="left:1238.00px;top:807.39px;font-size:15.84px;line-height:15.84px;color:#1a1a1a;transform:scaleX(0.9179);transform-origin:0 0;">Cancel</div>
<div class="a" style="left:0;top:972.5px;width:1541px;height:36px;background:#f3f3f3;border-top:1px solid #d2d2d2"></div>
<div class="a" style="left:990px;top:973.5px;width:60px;height:33px;background:#dedede"></div>
<div class="a" style="left:19.50px;top:983.33px;font-size:16.86px;line-height:16.86px;color:#262626;transform:scaleX(0.9065);transform-origin:0 0;">Slide 1 of 2</div>
<div class="a" style="left:171.80px;top:983.37px;font-size:16.57px;line-height:16.57px;color:#262626;transform:scaleX(0.9090);transform-origin:0 0;">English (United States)</div>
<div class="a" style="left:375.90px;top:983.17px;font-size:16.57px;line-height:16.57px;color:#262626;transform:scaleX(0.9409);transform-origin:0 0;font-weight:bold;">Accessibility: Investigate</div>
<div class="a" style="left:792.30px;top:983.17px;font-size:16.57px;line-height:16.57px;color:#262626;transform:scaleX(0.9295);transform-origin:0 0;">Notes</div>
<div class="a" style="left:887.60px;top:983.17px;font-size:16.57px;line-height:16.57px;color:#262626;transform:scaleX(0.9324);transform-origin:0 0;">Comments</div>
<div class="a" style="left:1444.40px;top:983.47px;font-size:15.99px;line-height:15.99px;color:#262626;transform:scaleX(0.9382);transform-origin:0 0;">59%</div>
<svg class="a" style="left:0;top:970px" width="1541" height="38" viewBox="0 970 1541 38">
<g fill="none" stroke="#333" stroke-width="1.3">
<path d="M125 981.5 H131.4 C133 981.5 134.3 982.8 134.3 984.5 V992.5 M125 981.5 V998.4 H131.7 M134.3 984.5 C134.3 982.8 135.6 981.5 137.2 981.5 H143.4 V989.8" stroke-width="1.4" stroke="#222"/>
<path d="M132.5 995.2 L137.4 1000 L145 992.2" stroke-width="1.4" stroke="#222"/>
<circle cx="357.4" cy="983" r="2.3" stroke="#222" stroke-width="1.3"/>
<path d="M354 988.8 C351 987.8 349.2 987.2 349.2 985.6 C349.2 984.1 350.6 983.6 352.2 984.2 L357.4 985.9 L362.6 984.2 C364.2 983.6 365.8 984.2 365.6 985.7 C365.4 986.9 364 987.4 361.2 988.3 M354 988.8 L353.8 993 L351.7 998.5 C351.2 1000.4 354.2 1000.9 354.8 999.3 L357.3 993.3 L358.5 996.5" stroke="#222" stroke-width="1.3"/>
<path d="M359.3 990.5 L368.9 999.7 M368.6 990.2 L359.3 999.7" stroke="#222" stroke-width="1.3"/>
<path d="M765.5 988.5 H789 M765.5 995 H789 M765.5 1001 H789 M773 982 L777.3 978.5 L781.5 982"/>
<path d="M862.5 980.5 H882 V994.5 H869 L865.5 999 V994.5 H862.5 Z"/>
<rect x="1010" y="981.5" width="20" height="17"/><path d="M1013.5 981.5 V998.5"/><rect x="1017.5" y="985" width="7.5" height="3.5"/>
<rect x="1069.5" y="981.5" width="8" height="6.5"/><rect x="1082" y="981.5" width="8" height="6.5"/><rect x="1069.5" y="992" width="8" height="6.5"/><rect x="1082" y="992" width="8" height="6.5"/>
<path d="M1130 982.5 C1134 981 1137 981.5 1139.5 983.5 C1142 981.5 1145 981 1149 982.5 V998 C1145 996.5 1142 997 1139.5 999 C1137 997 1134 996.5 1130 998 Z M1139.5 983.5 V999 M1132.5 986 H1137 M1132.5 989 H1137 M1132.5 992 H1137 M1142 986 H1146.5 M1142 989 H1146.5 M1142 992 H1146.5"/>
<path d="M1190 980.5 H1209 M1192 980.5 V991 H1207 V980.5 M1199.5 991 V998.5 M1194 998.5 H1205 M1196 985 H1203"/>
<path d="M1238.5 989.6 H1249.3"/>
<path d="M1414.5 989.6 H1425.5 M1420 984 V995.3"/>
<path d="M1497 985 L1494 989 L1497 993 M1512 985 L1515 989 L1512 993 M1501 980.5 L1504.5 977.5 L1508 980.5 M1501 997.5 L1504.5 1000.5 L1508 997.5" stroke-width="1.4"/>
<rect x="1499.5" y="983.5" width="10" height="11" stroke-width="1.4"/>
</g>
<rect x="1258.5" y="988.8" width="147" height="1.6" fill="#555"/>
<rect x="1296" y="981" width="8" height="17" fill="#555"/>
<rect x="1331.5" y="985" width="1.3" height="9" fill="#555"/>
</svg>
<div class="a" style="left:679.40px;top:568.74px;font-size:21.80px;line-height:21.80px;color:#0a0a0a;transform:scaleX(1.0289);transform-origin:0 0;font-weight:bold;">Type in the name of your</div>
<div class="a" style="left:733.00px;top:598.04px;font-size:21.80px;line-height:21.80px;color:#0a0a0a;transform:scaleX(1.0300);transform-origin:0 0;font-weight:bold;">new document</div>
<div class="a" style="left:818.70px;top:695.86px;font-size:22.97px;line-height:22.97px;color:#0a0a0a;transform:scaleX(1.0641);transform-origin:0 0;font-weight:bold;">Choose when to edit</div>
<div class="a" style="left:878.60px;top:727.56px;font-size:22.97px;line-height:22.97px;color:#0a0a0a;transform:scaleX(1.0859);transform-origin:0 0;font-weight:bold;">document</div>
<div class="a" style="left:57.50px;top:782.23px;font-size:28.20px;line-height:28.20px;color:#0a0a0a;transform:scaleX(1.0236);transform-origin:0 0;font-weight:bold;">Create New</div>
<div class="a" style="left:65.70px;top:819.53px;font-size:28.20px;line-height:28.20px;color:#0a0a0a;transform:scaleX(1.0306);transform-origin:0 0;font-weight:bold;">Document</div>
<div class="a" style="left:1054.20px;top:887.41px;font-size:25.15px;line-height:25.15px;color:#0a0a0a;transform:scaleX(1.0602);transform-origin:0 0;font-weight:bold;">OK Button</div>
<svg class="a" style="left:0;top:0" width="1541" height="1008" viewBox="0 0 1541 1008">
<g fill="#0a0a0a">
<path d="M813.5 503.5 L821.5 527 L805.5 527 Z"/><rect x="811.5" y="525" width="4.2" height="44"/>
<path d="M775.8 707 L799.2 699 L795 707 L799.2 715 Z"/><rect x="797" y="705" width="18" height="4.2"/>
<path d="M1128.6 848.6 L1136.3 871.5 L1128.5 868 L1120.5 871.5 Z"/><rect x="1126.5" y="869" width="4.2" height="17.5"/>
<path d="M1185.4 543 L1207.7 535.2 L1203.5 543 L1207.7 550.8 Z"/><rect x="1205" y="541" width="17" height="4.2"/>
<path d="M388.1 661.2 L377.5 681 L375.5 673 L366.5 668.5 Z"/>
</g>
<circle cx="1228.1" cy="543" r="5.8" fill="#fff" stroke="#0a0a0a" stroke-width="4"/>
<line x1="218.7" y1="789.7" x2="373" y2="673" stroke="#0a0a0a" stroke-width="4.5"/>
</svg>
<div class="a" style="left:0;top:0;width:1541px;height:1008px;border-left:2px solid #888;border-top:2px solid #888;border-right:3px solid #888;border-bottom:2px solid #888;z-index:50"></div>
</body></html>
